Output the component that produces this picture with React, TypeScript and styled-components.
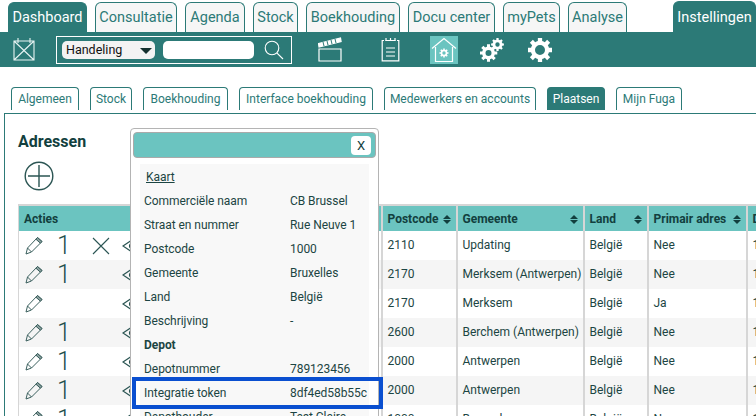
import React from "react";
import styled, { createGlobalStyle } from "styled-components";

const Global = createGlobalStyle`
  html, body { margin: 0; padding: 0; background: #fff; }
  body { font-family: Roboto, "Noto Sans", sans-serif; color: #1c4543; }
`;

const Page = styled.div`
  position: relative;
  width: 756px;
  height: 416px;
  overflow: hidden;
  background: #fff;
`;

const TopTabs = styled.div`
  display: flex;
  height: 32px;
  padding-left: 8px;
  align-items: flex-end;
  gap: 8px;
`;

const TopTab = styled.div<{ $w: number; $active?: boolean; $push?: number }>`
  box-sizing: border-box;
  width: ${(p) => p.$w}px;
  margin-left: ${(p) => p.$push ?? 0}px;
  height: ${(p) => (p.$push ? 31 : 30)}px;
  display: flex;
  align-items: center;
  justify-content: center;
  font-size: 14.5px;
  white-space: nowrap;
  border-radius: 6px 6px 0 0;
  border: 1px solid #2c7a77;
  border-bottom: 0;
  background: ${(p) => (p.$active ? "#2c7a77" : "#f6f6f6")};
  color: ${(p) => (p.$active ? "#fff" : "#2c7a77")};
`;

const Toolbar = styled.div`
  display: flex;
  align-items: center;
  height: 35px;
  background: #2c7a77;
  padding-left: 13px;
`;

const ToolIcon = styled.div<{ $w: number; $left: number; $active?: boolean }>`
  box-sizing: border-box;
  width: ${(p) => p.$w}px;
  height: 28px;
  margin-left: ${(p) => p.$left}px;
  display: flex;
  align-items: center;
  justify-content: center;
  background: ${(p) => (p.$active ? "#6bc4c0" : "transparent")};
  svg { display: block; flex: none; }
`;

const SearchBox = styled.div`
  box-sizing: border-box;
  width: 236px;
  height: 28px;
  margin-left: 21px;
  border: 1px solid #fff;
  display: flex;
  align-items: center;
  padding-left: 5px;
`;

const Select = styled.div`
  box-sizing: border-box;
  width: 93px;
  height: 18px;
  border-radius: 5px;
  background: #f3f3f3;
  display: flex;
  align-items: center;
  justify-content: space-between;
  padding: 0 3px 0 4px;
  font-size: 12.5px;
  color: #111;
`;

const Caret = styled.span`
  width: 0;
  height: 0;
  border-left: 6px solid transparent;
  border-right: 6px solid transparent;
  border-top: 6px solid #15302f;
  margin-top: 2px;
`;

const Input = styled.div`
  width: 91px;
  height: 18px;
  margin-left: 8px;
  border-radius: 5px;
  background: #fff;
`;

const SearchIcon = styled.div`
  margin-left: 10px;
  height: 20px;
`;

const SubTabs = styled.div`
  display: flex;
  gap: 11px;
  height: 23px;
  margin-top: 20px;
  padding-left: 11px;
`;

const SubTab = styled.div<{ $w: number; $active?: boolean }>`
  box-sizing: border-box;
  width: ${(p) => p.$w}px;
  height: 23px;
  display: flex;
  align-items: center;
  justify-content: center;
  font-size: 12px;
  white-space: nowrap;
  border-radius: 4px 4px 0 0;
  border: 1px solid #2c7a77;
  border-bottom: 0;
  background: ${(p) => (p.$active ? "#2c7a77" : "#fff")};
  color: ${(p) => (p.$active ? "#fff" : "#2c7a77")};
`;

const Panel = styled.div`
  margin: 3px 0 0 4px;
  padding: 19px 0 0 13px;
  border-left: 1px solid #2c7a77;
  border-top: 1px solid #2c7a77;
  height: 300px;
`;

const Title = styled.h1`
  margin: 0;
  font-size: 16px;
  line-height: 18px;
  font-weight: 700;
  color: #123f3e;
`;

const AddButton = styled.div`
  margin: 10px 0 0 6px;
  height: 30px;
  svg { display: block; }
`;

const Table = styled.table`
  margin-top: 13px;
  border-collapse: collapse;
  table-layout: fixed;
  width: 781px;
  border-top: 2px solid #d6d6d6;
  border-left: 1px solid #d6d6d6;
`;

const Col = styled.col<{ $w: number }>`
  width: ${(p) => p.$w}px;
`;

const Th = styled.th`
  height: 24px;
  padding: 1px 4px 0 5px;
  background: #6bc4c0;
  border-right: 2px solid #d6d6d6;
  font-size: 12px;
  font-weight: 700;
  color: #123f3e;
  text-align: left;
  white-space: nowrap;
  overflow: hidden;
`;

const ThInner = styled.div`
  display: flex;
  align-items: center;
  justify-content: space-between;
`;

const SortIcon = styled.span`
  display: inline-flex;
  flex-direction: column;
  gap: 1px;
  margin-right: 1px;
  flex: none;
  &::before, &::after {
    content: "";
    width: 0;
    height: 0;
    border-left: 4px solid transparent;
    border-right: 4px solid transparent;
  }
  &::before { border-bottom: 4px solid #123f3e; }
  &::after { border-top: 4px solid #123f3e; }
`;

const Tr = styled.tr`
  height: 29px;
  background: #fff;
  &:nth-child(even) { background: #f5f5f5; }
`;

const Td = styled.td`
  padding: 0 4px 2px 5px;
  border-right: 2px solid #d6d6d6;
  font-size: 12px;
  white-space: nowrap;
  overflow: hidden;
  color: #1c4543;
`;

const ActionCell = styled.td`
  padding: 0;
  border-right: 2px solid #d6d6d6;
  overflow: hidden;
`;

const Actions = styled.div`
  display: flex;
  align-items: center;
  height: 29px;
  padding-left: 6px;
  svg { display: block; flex: none; }
`;

const Count = styled.span<{ $hidden?: boolean }>`
  width: 14px;
  margin-left: 14px;
  text-align: center;
  font-size: 25px;
  font-weight: 300;
  line-height: 29px;
  color: #1f4f4d;
  visibility: ${(p) => (p.$hidden ? "hidden" : "visible")};
`;

const Cross = styled.div<{ $hidden?: boolean }>`
  width: 20px;
  margin-left: 20px;
  visibility: ${(p) => (p.$hidden ? "hidden" : "visible")};
`;

const EyeSlot = styled.div`
  margin-left: 11px;
`;

const Popover = styled.div`
  position: absolute;
  left: 130px;
  top: 128px;
  box-sizing: border-box;
  width: 249px;
  height: 320px;
  background: #fff;
  border: 1px solid #b4b4b4;
  border-radius: 4px;
  padding: 3px 2px 0 2px;
`;

const PopHeader = styled.div`
  box-sizing: border-box;
  height: 26px;
  background: #6bc4c0;
  border: 1px solid #aaa;
  border-radius: 4px;
  display: flex;
  align-items: center;
  justify-content: flex-end;
  padding-right: 4px;
`;

const CloseBtn = styled.div`
  width: 20px;
  height: 19px;
  background: #fff;
  border-radius: 4px;
  display: flex;
  align-items: center;
  justify-content: center;
  font-size: 13px;
  color: #123f3e;
`;

const PopBody = styled.div`
  margin: 6px 7px 0 7px;
  background: #f8f8f8;
  padding: 1px 0 0 4px;
`;

const PopRow = styled.div`
  display: grid;
  grid-template-columns: 146px 1fr;
  height: 24px;
  line-height: 24px;
  font-size: 12px;
  letter-spacing: -0.05px;
  color: #1c4543;
  white-space: nowrap;
`;

const MapLink = styled.a`
  margin-left: 2px;
  color: #1c4543;
  text-decoration: underline;
`;

const Highlight = styled.div`
  position: absolute;
  left: 132px;
  top: 377px;
  box-sizing: border-box;
  width: 251px;
  height: 32px;
  border: 4px solid #0a4fd0;
`;

const Bold = styled.b`
  font-weight: 700;
`;

const gear = (cx: number, cy: number, ro: number, ri: number, hole: number, teeth = 8) => {
  let d = "";
  const step = (Math.PI * 2) / teeth;
  for (let i = 0; i < teeth; i++) {
    const a = i * step;
    const pts: [number, number][] = [
      [ri, a - step * 0.5],
      [ri, a - step * 0.3],
      [ro, a - step * 0.22],
      [ro, a + step * 0.22],
      [ri, a + step * 0.3],
    ];
    pts.forEach(([r, t], j) => {
      d += `${i === 0 && j === 0 ? "M" : "L"}${(cx + r * Math.cos(t)).toFixed(2)} ${(cy + r * Math.sin(t)).toFixed(2)}`;
    });
  }
  d += `Z M${cx + hole} ${cy}A${hole} ${hole} 0 1 0 ${cx - hole} ${cy}A${hole} ${hole} 0 1 0 ${cx + hole} ${cy}Z`;
  return d;
};

const Calendar = () => (
  <svg width="22" height="25" viewBox="0 0 22 25" fill="none" stroke="#e8f4f3" strokeWidth="1.1">
    <path d="M1 4h20v19H1zM1 4l20 19M21 4L1 23M5 1v5M17 1v5" />
  </svg>
);

const Magnifier = () => (
  <svg width="20" height="20" viewBox="0 0 20 20" fill="none" stroke="#fff" strokeWidth="1.1">
    <circle cx="8" cy="8" r="6.8" />
    <path d="M12.8 12.8L19 19" />
  </svg>
);

const Clapper = () => (
  <svg width="24" height="25" viewBox="0 0 24 25" fill="none" stroke="#fff" strokeWidth="1.2">
    <path d="M1 12h22v12H1z" />
    <path d="M0.5 6.5L22.5 1l0.6 3.5L1 10z" fill="#fff" />
    <path d="M5 5l1 4M9 4l1 4M13 3l1 4M17 2l1 4" stroke="#2c7a77" strokeWidth="1" />
  </svg>
);

const Clipboard = () => (
  <svg width="19" height="25" viewBox="0 0 19 25" fill="none" stroke="#fff" strokeWidth="1.2">
    <path d="M3 3.5H1.2v20.3h16.6V3.5H16" />
    <path d="M4.5 3.5h10M5 11h9M5 15h9M5 19h9" />
    <path d="M5 1v3M9.5 1v3M14 1v3" />
  </svg>
);

const House = () => (
  <svg width="26" height="26" viewBox="0 0 26 26" fill="none" stroke="#fff" strokeWidth="1.2">
    <path d="M1 11.5L13 1.5l12 10M4.5 10v14.5h17V10" />
    <path d={gear(13, 16, 4.6, 3.4, 1.7)} fill="#fff" fillRule="evenodd" stroke="none" />
  </svg>
);

const Gears = () => (
  <svg width="24" height="24" viewBox="0 0 24 24">
    <path d={gear(8.5, 15, 8.9, 6.4, 3)} fill="#fff" fillRule="evenodd" />
    <path d={gear(17.5, 6.5, 6.5, 4.9, 2.2)} fill="#fff" fillRule="evenodd" />
  </svg>
);

const Gear = () => (
  <svg width="24" height="24" viewBox="0 0 24 24">
    <path d={gear(12, 12, 12.4, 9.2, 5)} fill="#fff" fillRule="evenodd" />
  </svg>
);

const Plus = () => (
  <svg width="30" height="30" viewBox="0 0 30 30" fill="none" stroke="#2b5553" strokeWidth="1.4">
    <circle cx="15" cy="15" r="13.8" />
    <path d="M15 4v22M4 15h22" />
  </svg>
);

const Pencil = () => (
  <svg width="18" height="19" viewBox="0 0 18 19" fill="none" stroke="#3a5f5d" strokeWidth="1">
    <path d="M1 18l1.5-6L12.5 1.5 17 5.5 6.5 16z" />
    <path d="M2.5 12L6.5 16" />
    <path d="M12.5 1.5L17 5.5 15.4 7.2 10.9 3.2z" fill="#8a9f9e" />
  </svg>
);

const CrossIcon = () => (
  <svg width="20" height="20" viewBox="0 0 20 20" fill="none" stroke="#2b5553" strokeWidth="1.1">
    <path d="M2 2l16 16M18 2L2 18" />
  </svg>
);

const Eye = () => (
  <svg width="20" height="14" viewBox="0 0 20 14" fill="none" stroke="#2b5553" strokeWidth="1.2">
    <path d="M1 7l9-6 9 6-9 6z" />
    <circle cx="10" cy="7" r="2.5" />
  </svg>
);

const topTabs: [string, number][] = [
  ["Consultatie", 82], ["Agenda", 60], ["Stock", 45], ["Boekhouding", 94],
  ["Docu center", 87], ["myPets", 57], ["Analyse", 59],
];
const subTabs: [string, number, boolean?][] = [
  ["Algemeen", 68], ["Stock", 42], ["Boekhouding", 85], ["Interface boekhouding", 134],
  ["Medewerkers en accounts", 152], ["Plaatsen", 58, true], ["Mijn Fuga", 66],
];
const rows: [string, string, string, string, string, boolean, boolean][] = [
  ["2110", "Updating", "België", "Nee", "1", true, true],
  ["2170", "Merksem (Antwerpen)", "België", "Nee", "1", true, false],
  ["2170", "Merksem", "België", "Ja", "1", false, false],
  ["2600", "Berchem (Antwerpen)", "België", "Nee", "1", true, false],
  ["2000", "Antwerpen", "België", "Nee", "1", true, false],
  ["2000", "Antwerpen", "België", "Nee", "1", true, false],
  ["1000", "Brussel", "België", "Nee", "1", true, false],
];
const details: [string, string][] = [
  ["Commerciële naam", "CB Brussel"],
  ["Straat en nummer", "Rue Neuve 1"],
  ["Postcode", "1000"],
  ["Gemeente", "Bruxelles"],
  ["Land", "België"],
  ["Beschrijving", "-"],
];

export default function App() {
  return (
    <Page>
      <Global />
      <TopTabs>
        <TopTab $w={79} $active>Dashboard</TopTab>
        {topTabs.map(([t, w]) => <TopTab key={t} $w={w}>{t}</TopTab>)}
        <TopTab $w={83} $active $push={38}>Instellingen</TopTab>
      </TopTabs>
      <Toolbar>
        <Calendar />
        <SearchBox>
          <Select>Handeling<Caret /></Select>
          <Input />
          <SearchIcon><Magnifier /></SearchIcon>
        </SearchBox>
        <ToolIcon $w={24} $left={26}><Clapper /></ToolIcon>
        <ToolIcon $w={19} $left={39}><Clipboard /></ToolIcon>
        <ToolIcon $w={28} $left={30} $active><House /></ToolIcon>
        <ToolIcon $w={24} $left={22}><Gears /></ToolIcon>
        <ToolIcon $w={24} $left={24}><Gear /></ToolIcon>
      </Toolbar>
      <SubTabs>
        {subTabs.map(([t, w, a]) => <SubTab key={t + w} $w={w} $active={a}>{t}</SubTab>)}
      </SubTabs>
      <Panel>
        <Title>Adressen</Title>
        <AddButton><Plus /></AddButton>
        <Table>
          <colgroup>
            <Col $w={363} /><Col $w={75} /><Col $w={127} /><Col $w={64} /><Col $w={99} /><Col $w={53} />
          </colgroup>
          <thead>
            <tr>
              <Th>Acties</Th>
              <Th><ThInner>Postcode<SortIcon /></ThInner></Th>
              <Th><ThInner>Gemeente<SortIcon /></ThInner></Th>
              <Th><ThInner>Land<SortIcon /></ThInner></Th>
              <Th><ThInner>Primair adres<SortIcon /></ThInner></Th>
              <Th>D</Th>
            </tr>
          </thead>
          <tbody>
            {rows.map((r, i) => (
              <Tr key={i}>
                <ActionCell>
                  <Actions>
                    <Pencil />
                    <Count $hidden={!r[5]}>1</Count>
                    <Cross $hidden={!r[6]}><CrossIcon /></Cross>
                    <EyeSlot><Eye /></EyeSlot>
                  </Actions>
                </ActionCell>
                <Td>{r[0]}</Td>
                <Td>{r[1]}</Td>
                <Td>{r[2]}</Td>
                <Td>{r[3]}</Td>
                <Td>{r[4]}</Td>
              </Tr>
            ))}
          </tbody>
        </Table>
      </Panel>
      <Popover>
        <PopHeader><CloseBtn>X</CloseBtn></PopHeader>
        <PopBody>
          <PopRow><MapLink href="#">Kaart</MapLink></PopRow>
          {details.map(([k, v]) => <PopRow key={k}><span>{k}</span><span>{v}</span></PopRow>)}
          <PopRow><Bold>Depot</Bold></PopRow>
          <PopRow><span>Depotnummer</span><span>789123456</span></PopRow>
          <PopRow><span>Integratie token</span><span>8df4ed58b55c</span></PopRow>
          <PopRow><span>Depothouder</span><span>Test Claire</span></PopRow>
        </PopBody>
      </Popover>
      <Highlight />
    </Page>
  );
}
